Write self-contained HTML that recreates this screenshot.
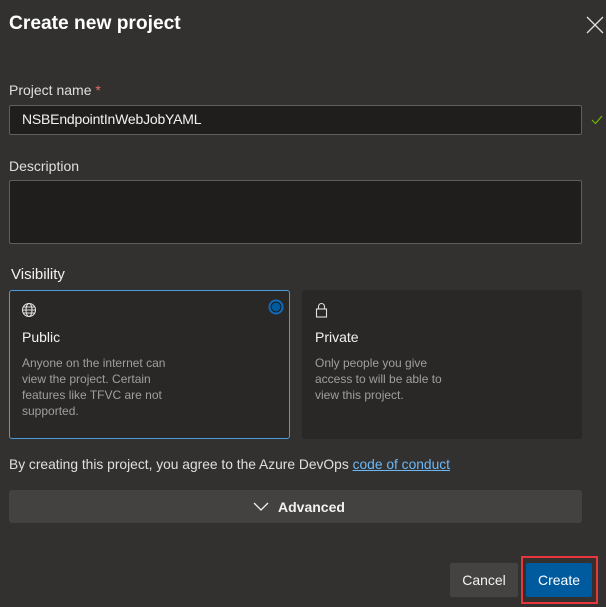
<!DOCTYPE html>
<html><head><style>
body{margin:0;width:606px;height:607px;background:#323130;font-family:"Liberation Sans",sans-serif;color:#f3f2f1;position:relative;overflow:hidden}
.a{position:absolute}
.lbl{font-size:14px;color:#e1dfdd}
.inp{background:#1f1e1d;border:1px solid #605e5c;box-sizing:border-box;border-radius:2px}
.card{background:#292827;border-radius:3px;box-sizing:border-box}
.desc{font-size:12px;line-height:16px;color:#a19f9d}
</style></head><body>
<div class="a" style="left:9px;top:13px;font-size:19.2px;font-weight:bold;color:#fff">Create new project</div>
<svg class="a" style="left:586px;top:16px" width="18" height="18"><path d="M1 1L17 17M17 1L1 17" stroke="#e1dfdd" stroke-width="1.3"/></svg>
<div class="a lbl" style="left:9px;top:82px">Project name <span style="color:#e46a6a">*</span></div>
<div class="a inp" style="left:9px;top:105px;width:573px;height:30px"></div>
<div class="a" style="left:22px;top:111px;font-size:14px;color:#f3f2f1;letter-spacing:-0.2px">NSBEndpointInWebJobYAML</div>
<svg class="a" style="left:591px;top:114px" width="12" height="12"><path d="M1 6L4.5 9.5L11 2" stroke="#6bb700" fill="none" stroke-width="1.2"/></svg>
<div class="a lbl" style="left:9px;top:158px">Description</div>
<div class="a inp" style="left:9px;top:180px;width:573px;height:64px"></div>
<div class="a" style="left:11px;top:266px;font-size:15px;color:#f3f2f1">Visibility</div>
<div class="a card" style="left:9px;top:290px;width:281px;height:149px;border:1px solid #4a9be0"></div>
<div class="a card" style="left:302px;top:290px;width:280px;height:149px"></div>
<svg class="a" style="left:21px;top:302px" width="16" height="16"><g fill="none" stroke="#e1dfdd" stroke-width="1.1"><circle cx="8" cy="8" r="6.5"/><ellipse cx="8" cy="8" rx="3" ry="6.5"/><path d="M1.5 8H14.5M2.5 5H13.5M2.5 11H13.5"/></g></svg>
<svg class="a" style="left:268px;top:299px" width="16" height="16"><circle cx="8" cy="8" r="7.5" fill="#0f6cbd"/><circle cx="8" cy="8" r="5" fill="#005a9e" stroke="#1a1a1a" stroke-width="1"/></svg>
<svg class="a" style="left:315px;top:302px" width="14" height="16"><g fill="none" stroke="#e1dfdd" stroke-width="1.1"><rect x="1.5" y="7" width="10" height="8"/><path d="M3.5 7V4.5a3 3 0 0 1 6 0V7"/></g></svg>
<div class="a" style="left:22px;top:329px;font-size:14px">Public</div>
<div class="a" style="left:315px;top:329px;font-size:14px">Private</div>
<div class="a desc" style="left:22px;top:355px;width:170px">Anyone on the internet can view the project. Certain features like TFVC are not supported.</div>
<div class="a desc" style="left:315px;top:355px;width:150px">Only people you give access to will be able to view this project.</div>
<div class="a" style="left:9px;top:457px;font-size:13.8px;color:#e1dfdd">By creating this project, you agree to the Azure DevOps <span style="color:#6cb8f6;text-decoration:underline">code of conduct</span></div>
<div class="a" style="left:9px;top:490px;width:573px;height:33px;background:#434241;border-radius:3px"></div>
<svg class="a" style="left:253px;top:500px" width="16" height="12"><path d="M1 3L8 10L15 3" stroke="#f3f2f1" fill="none" stroke-width="1.3"/></svg>
<div class="a" style="left:278px;top:499px;font-size:14px;font-weight:bold;color:#f3f2f1">Advanced</div>
<div class="a" style="left:450px;top:563px;width:68px;height:34px;background:#444342;border-radius:2px;text-align:center;line-height:34px;font-size:14px">Cancel</div>
<div class="a" style="left:521px;top:556px;width:77px;height:48px;border:2px solid #e8363d;box-sizing:border-box"></div>
<div class="a" style="left:526px;top:563px;width:66px;height:34px;background:#005a9e;border-radius:2px;text-align:center;line-height:34px;font-size:14px;color:#fff">Create</div>
</body></html>
